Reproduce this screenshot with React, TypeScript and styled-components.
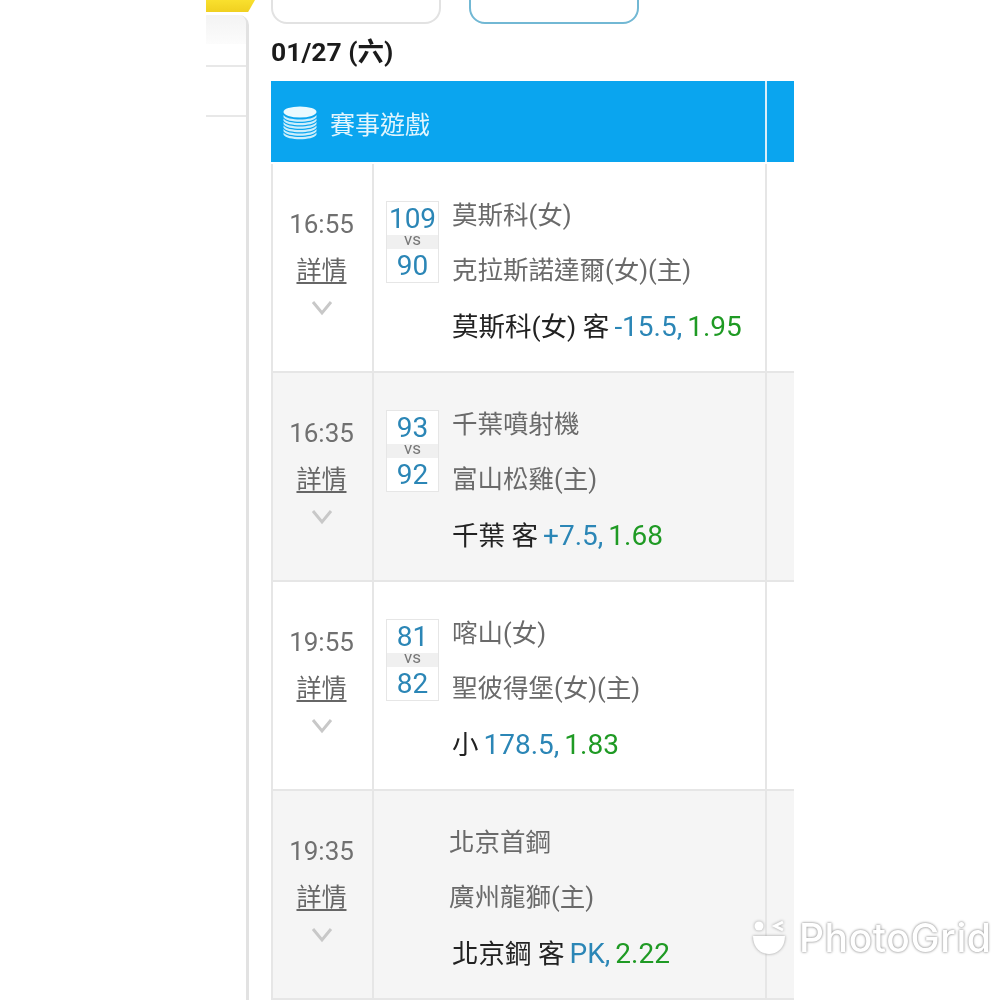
import { createGlobalStyle } from "styled-components";
import styled from "styled-components";

const GlobalStyle = createGlobalStyle`
  html, body {
    margin: 0;
    padding: 0;
    background: white;
  }
`;

const Page = styled.div`
  position: relative;
  width: 1000px;
  height: 1000px;
  overflow: hidden;
  background: white;
  display: flex;
  padding-left: 206px;
  box-sizing: border-box;
  font-family: Roboto, "Noto Sans CJK TC", sans-serif;
  filter: blur(0.45px);
`;

const SideColumn = styled.aside`
  width: 43px;
  flex: none;
  display: flex;
  flex-direction: column;
`;

const YellowTab = styled.div`
  width: 49px;
  height: 12px;
  flex: none;
  background: linear-gradient(#f9e02e, #f0d020);
  clip-path: polygon(0 0, 100% 0, 86% 100%, 0 100%);
`;

const SidePanel = styled.div`
  flex: 1;
  margin-top: 3px;
  border-right: 3px solid #e2e2e2;
  border-top-right-radius: 10px;
`;

const SideShade = styled.div`
  height: 29px;
  background: linear-gradient(#f3f3f3, #fcfcfc);
  border-top-right-radius: 8px;
`;

const SideGap = styled.div<{ $height: number }>`
  height: ${(p) => p.$height}px;
  border-bottom: 2px solid #e8e8e8;
`;

const Main = styled.main`
  width: 523px;
  margin-left: 22px;
  flex: none;
  display: flex;
  flex-direction: column;
  overflow: hidden;
`;

const TabRow = styled.div`
  height: 24px;
  flex: none;
  display: flex;
  gap: 28px;
  align-items: flex-end;
`;

const TabButton = styled.div<{ $active?: boolean }>`
  width: 170px;
  height: 50px;
  box-sizing: border-box;
  background: white;
  border: 2px solid ${(p) => (p.$active ? "#72b8d4" : "#e2e2e2")};
  border-radius: 16px;
  flex: none;
  display: flex;
  align-items: flex-end;
  justify-content: center;
  padding-bottom: 19px;
  font-size: 20px;
  line-height: 24px;
  color: #777;
`;

const DateLabel = styled.h2`
  margin: 0;
  height: 57px;
  flex: none;
  box-sizing: border-box;
  padding-bottom: 6px;
  display: flex;
  align-items: center;
  font-size: 26.5px;
  font-weight: 700;
  color: #1b1b1b;
`;

const TableHeader = styled.div`
  height: 81px;
  flex: none;
  display: grid;
  grid-template-columns: 496px 1fr;
  background: #0aa5ef;
  margin-bottom: 2px;
`;

const HeaderTitle = styled.div`
  display: flex;
  align-items: center;
  gap: 13px;
  padding: 2px 0 0 12px;
  border-right: 2px solid #d9eef8;
  color: #e2f5fd;
  font-size: 25px;
`;

const Row = styled.div<{ $shaded?: boolean }>`
  height: 209px;
  flex: none;
  box-sizing: border-box;
  display: grid;
  grid-template-columns: 101px 393px 1fr;
  background: ${(p) => (p.$shaded ? "#f5f5f5" : "white")};
  border-left: 2px solid #e6e6e6;
  border-bottom: 2px solid #e6e6e6;
`;

const TimeCell = styled.div`
  display: flex;
  flex-direction: column;
  align-items: center;
  padding: 45px 2px 0 0;
  border-right: 2px solid #e6e6e6;
`;

const TimeText = styled.div`
  font-size: 26px;
  line-height: 30px;
  color: #707070;
`;

const DetailLink = styled.a`
  margin-top: 17px;
  font-size: 25px;
  line-height: 30px;
  color: #666;
  text-decoration: underline;
  text-underline-offset: 3px;
`;

const Chevron = styled.svg`
  margin-top: 14px;
  display: block;
`;

const MatchCell = styled.div`
  display: flex;
  align-items: flex-start;
  padding: 37px 0 0 12px;
  border-right: 2px solid #e6e6e6;
`;

const ScoreBox = styled.div`
  width: 53px;
  height: 82px;
  flex: none;
  box-sizing: border-box;
  border: 1px solid #e6e6e6;
  background: white;
  display: flex;
  flex-direction: column;
  align-items: center;
  margin-right: 13px;
`;

const ScoreValue = styled.div`
  height: 33px;
  font-size: 28px;
  line-height: 33px;
  color: #2b86b6;
`;

const VsBand = styled.div`
  align-self: stretch;
  height: 14px;
  flex: none;
  background: #f0f0f0;
  font-size: 17px;
  line-height: 8px;
  text-align: center;
  color: #777;
`;

const Teams = styled.div<{ $noScore?: boolean }>`
  padding-left: ${(p) => (p.$noScore ? "63px" : "0")};
  display: flex;
  flex-direction: column;
`;

const TeamName = styled.div`
  height: 56px;
  font-size: 25.5px;
  line-height: 30px;
  color: #6a6a6a;
  white-space: nowrap;
  margin-top: -1px;
`;

const BetLine = styled.div<{ $noScore?: boolean }>`
  height: 56px;
  margin-top: 1px;
  margin-left: ${(p) => (p.$noScore ? "3px" : "0")};
  font-size: 26.5px;
  line-height: 30px;
  color: #222;
  white-space: nowrap;
`;

const BetLineValue = styled.span`
  margin-left: 5px;
  font-size: 28px;
  color: #2b86b6;
`;

const BetOdds = styled.span`
  margin-left: 5px;
  font-size: 28px;
  color: #1f9a24;
`;

const Watermark = styled.div`
  position: absolute;
  left: 752px;
  top: 914px;
  display: flex;
  align-items: center;
  gap: 13px;
  color: white;
  font-family: Inter, Roboto, sans-serif;
  font-size: 39px;
  font-weight: 500;
  letter-spacing: 0.6px;
  text-shadow: 0 0 3px #999, 0 0 2px #aaa;
`;

const CoinIcon = () => (
  <svg width="34" height="34" viewBox="0 0 34 34">
    <ellipse cx="17" cy="6" rx="16.5" ry="5.5" fill="#eafaff" />
    {[9, 12.5, 16, 19.5, 23, 26.5].map((y) => (
      <path
        key={y}
        d={`M0.5 ${y} C4 ${y + 6} 30 ${y + 6} 33.5 ${y} V${y + 2.2} C30 ${y + 8.2} 4 ${y + 8.2} 0.5 ${y + 2.2} Z`}
        fill="#cdeefb"
      />
    ))}
  </svg>
);

const ChevronDown = () => (
  <Chevron width="22" height="16" viewBox="0 0 22 16">
    <polyline points="2,2 11,13 20,2" fill="none" stroke="#c8c8c8" strokeWidth="3" />
  </Chevron>
);

const FaceIcon = () => (
  <svg width="34" height="36" viewBox="0 0 34 36" style={{ filter: "drop-shadow(0 0 1.5px #999)" }}>
    <circle cx="7" cy="6" r="4.5" fill="white" />
    <polyline points="31,2 23,6 31,10" fill="none" stroke="white" strokeWidth="3" />
    <path d="M1 16 H33 C33 28 25 34 17 34 C9 34 1 28 1 16 Z" fill="white" />
  </svg>
);

type Game = {
  time: string;
  score?: [string, string];
  teams: [string, string];
  pick: string;
  line: string;
  odds: string;
};

const games: Game[] = [
  {
    time: "16:55",
    score: ["109", "90"],
    teams: ["莫斯科(女)", "克拉斯諾達爾(女)(主)"],
    pick: "莫斯科(女) 客",
    line: "-15.5,",
    odds: "1.95",
  },
  {
    time: "16:35",
    score: ["93", "92"],
    teams: ["千葉噴射機", "富山松雞(主)"],
    pick: "千葉 客",
    line: "+7.5,",
    odds: "1.68",
  },
  {
    time: "19:55",
    score: ["81", "82"],
    teams: ["喀山(女)", "聖彼得堡(女)(主)"],
    pick: "小",
    line: "178.5,",
    odds: "1.83",
  },
  {
    time: "19:35",
    teams: ["北京首鋼", "廣州龍獅(主)"],
    pick: "北京鋼 客",
    line: "PK,",
    odds: "2.22",
  },
];

function App() {
  return (
    <Page>
      <GlobalStyle />
      <SideColumn>
        <YellowTab />
        <SidePanel>
          <SideShade />
          <SideGap $height={21} />
          <SideGap $height={48} />
        </SidePanel>
      </SideColumn>

      <Main>
        <TabRow>
          <TabButton>賽事結果</TabButton>
          <TabButton $active>投注紀錄</TabButton>
        </TabRow>
        <DateLabel>01/27 (六)</DateLabel>
        <TableHeader>
          <HeaderTitle>
            <CoinIcon />
            賽事遊戲
          </HeaderTitle>
        </TableHeader>

        {games.map((game, index) => (
          <Row key={game.time} $shaded={index % 2 === 1}>
            <TimeCell>
              <TimeText>{game.time}</TimeText>
              <DetailLink>詳情</DetailLink>
              <ChevronDown />
            </TimeCell>
            <MatchCell>
              {game.score && (
                <ScoreBox>
                  <ScoreValue>{game.score[0]}</ScoreValue>
                  <VsBand>vs</VsBand>
                  <ScoreValue>{game.score[1]}</ScoreValue>
                </ScoreBox>
              )}
              <Teams $noScore={!game.score}>
                <TeamName>{game.teams[0]}</TeamName>
                <TeamName>{game.teams[1]}</TeamName>
                <BetLine $noScore={!game.score}>
                  {game.pick}
                  <BetLineValue>{game.line}</BetLineValue>
                  <BetOdds>{game.odds}</BetOdds>
                </BetLine>
              </Teams>
            </MatchCell>
            <div />
          </Row>
        ))}
      </Main>

      <Watermark>
        <FaceIcon />
        PhotoGrid
      </Watermark>
    </Page>
  );
}

export default App;
